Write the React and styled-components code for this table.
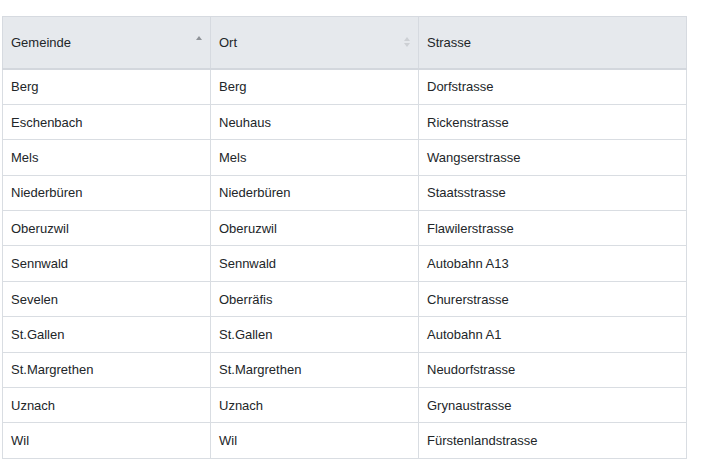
import React from 'react';
import styled, { createGlobalStyle } from 'styled-components';

const rows = [
  ['Berg', 'Berg', 'Dorfstrasse'],
  ['Eschenbach', 'Neuhaus', 'Rickenstrasse'],
  ['Mels', 'Mels', 'Wangserstrasse'],
  ['Niederbüren', 'Niederbüren', 'Staatsstrasse'],
  ['Oberuzwil', 'Oberuzwil', 'Flawilerstrasse'],
  ['Sennwald', 'Sennwald', 'Autobahn A13'],
  ['Sevelen', 'Oberräfis', 'Churerstrasse'],
  ['St.Gallen', 'St.Gallen', 'Autobahn A1'],
  ['St.Margrethen', 'St.Margrethen', 'Neudorfstrasse'],
  ['Uznach', 'Uznach', 'Grynaustrasse'],
  ['Wil', 'Wil', 'Fürstenlandstrasse'],
];

const GlobalStyle = createGlobalStyle`
  body {
    margin: 0;
    background: #ffffff;
    font-family: "Liberation Sans", Arial, sans-serif;
    color: #222629;
  }
`;

const Page = styled.div`
  padding: 16px 0 0 2px;
`;

const Table = styled.table`
  width: 684px;
  border-collapse: collapse;
  border-spacing: 0;
  table-layout: fixed;
  font-size: 13px;
`;

const Th = styled.th`
  position: relative;
  box-sizing: border-box;
  width: ${p => p.$width}px;
  height: 52px;
  padding: 0 8px;
  background: #e6e9ed;
  border: 1px solid #d6dae0;
  border-bottom: 2px solid #d3d7dd;
  font-weight: normal;
  text-align: left;
  vertical-align: middle;
  color: #222629;
`;

const Td = styled.td`
  height: 34.4px;
  padding: 0 8px;
  border: 1px solid #d9dde2;
  vertical-align: middle;
`;

const SortIcon = styled.span`
  position: absolute;
  right: 8px;
  top: 50%;
  transform: translateY(-50%);
  display: flex;
  flex-direction: column;
  align-items: center;
  gap: 2px;
`;

const Arrow = styled.span`
  width: 0;
  height: 0;
  border-left: 3.5px solid transparent;
  border-right: 3.5px solid transparent;
  ${p => p.$down
    ? `border-top: 4px solid ${p.$color};`
    : `border-bottom: 4px solid ${p.$color};`}
`;

const AscIcon = () => (
  <SortIcon style={{ marginTop: -4 }}>
    <Arrow $color="#8f9398" />
  </SortIcon>
);

const BothIcon = () => (
  <SortIcon>
    <Arrow $color="#cdd0d4" />
    <Arrow $down $color="#cdd0d4" />
  </SortIcon>
);

export default function App() {
  return (
    <Page>
      <GlobalStyle />
      <Table>
        <thead>
          <tr>
            <Th $width={208}>Gemeinde<AscIcon /></Th>
            <Th $width={208}>Ort<BothIcon /></Th>
            <Th $width={268}>Strasse</Th>
          </tr>
        </thead>
        <tbody>
          {rows.map(r => (
            <tr key={r[0] + r[2]}>
              <Td>{r[0]}</Td>
              <Td>{r[1]}</Td>
              <Td>{r[2]}</Td>
            </tr>
          ))}
        </tbody>
      </Table>
    </Page>
  );
}
